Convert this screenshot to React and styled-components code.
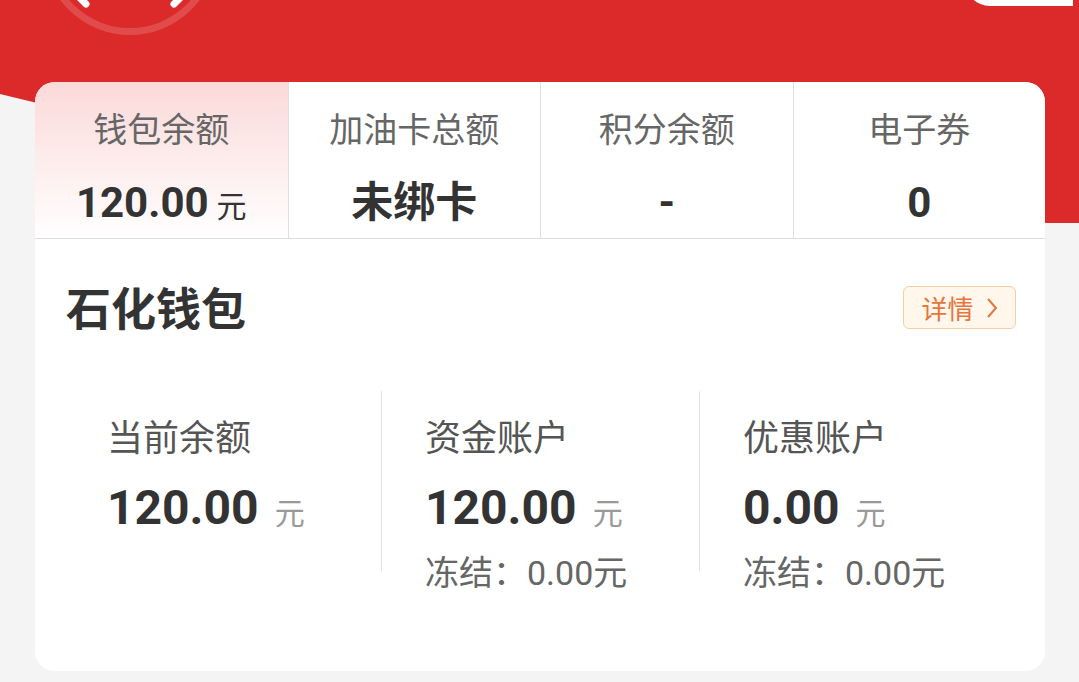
import React from 'react';
import styled, { createGlobalStyle } from 'styled-components';

const GlobalStyle = createGlobalStyle`
  html, body {
    margin: 0;
    padding: 0;
    background: #f4f4f4;
  }
  body {
    font-family: Roboto, "Noto Sans CJK SC", "Noto Sans", sans-serif;
  }
`;

const Page = styled.div`
  width: 1079px;
  height: 682px;
  overflow: hidden;
  background: #f4f4f4;
`;

const Hero = styled.div`
  height: 223px;
  background: #dc2929;
  clip-path: circle(4337px at 1050px -4114px);
  display: flex;
  justify-content: space-between;
  align-items: flex-start;
`;

const Avatar = styled.div`
  width: 174px;
  height: 174px;
  margin: -139px 0 0 43px;
  border-radius: 50%;
  box-sizing: border-box;
  border: 7px solid rgba(255, 255, 255, 0.16);
  display: flex;
  align-items: center;
  justify-content: center;
`;

const Pill = styled.div`
  width: 108px;
  height: 50px;
  margin: -44px 6px 0 0;
  background: #fff;
  border-radius: 25px 0 0 25px;
`;

const Card = styled.div`
  position: relative;
  z-index: 1;
  margin: -141px 34px 0 35px;
  background: #fff;
  border-radius: 20px;
  overflow: hidden;
  padding-bottom: 78px;
`;

const Tabs = styled.div`
  display: grid;
  grid-template-columns: repeat(4, 1fr);
  border-bottom: 1px solid #dedede;
`;

const Tab = styled.div`
  display: flex;
  flex-direction: column;
  align-items: center;
  padding: 28px 0 5px;
  border-left: ${p => (p.$first ? 'none' : '1px solid #dedede')};
  background: ${p => (p.$active ? 'linear-gradient(180deg, #fbd9d9 0%, #fff 100%)' : '#fff')};
`;

const TabLabel = styled.div`
  font-size: 34px;
  line-height: 41px;
  color: #666;
`;

const TabValue = styled.div`
  margin-top: 26px;
  font-size: 42px;
  line-height: 52px;
  font-weight: 700;
  color: #333;
  display: flex;
  align-items: baseline;
`;

const Unit = styled.span`
  font-weight: 400;
  font-size: ${p => p.$size || 30}px;
  color: ${p => p.$color || '#333'};
  margin-left: ${p => p.$gap || 8}px;
`;

const SectionHead = styled.div`
  display: flex;
  align-items: center;
  justify-content: space-between;
  padding: 45px 29px 0 31px;
`;

const Title = styled.div`
  font-size: 45px;
  line-height: 53px;
  font-weight: 700;
  color: #333;
`;

const DetailButton = styled.div`
  box-sizing: border-box;
  width: 113px;
  height: 43px;
  margin-bottom: 6px;
  display: flex;
  align-items: center;
  justify-content: center;
  gap: 12px;
  border: 1px solid #f3cfa6;
  border-radius: 6px;
  background: #fff6ec;
  color: #e5753b;
  font-size: 26px;
`;

const Accounts = styled.div`
  display: grid;
  grid-template-columns: repeat(3, 318px);
  margin: 54px 28px 0;
`;

const Account = styled.div`
  position: relative;
  padding: 27px 0 0 44px;

  &::before {
    content: '';
    display: ${p => (p.$first ? 'none' : 'block')};
    position: absolute;
    left: 0;
    top: 0;
    width: 1px;
    height: 180px;
    background: #e2e2e2;
  }
`;

const AccountLabel = styled.div`
  font-size: 36px;
  line-height: 43px;
  color: #555;
`;

const AccountValue = styled.div`
  margin-top: 17px;
  font-size: 48px;
  line-height: 60px;
  font-weight: 700;
  color: #333;
  display: flex;
  align-items: baseline;
`;

const Frozen = styled.div`
  margin-top: 9px;
  font-size: 34px;
  line-height: 40px;
  color: #666;
`;

const tabs = [
  { label: '钱包余额', value: '120.00', unit: '元', active: true },
  { label: '加油卡总额', value: '未绑卡' },
  { label: '积分余额', value: '-' },
  { label: '电子券', value: '0' }
];

const accounts = [
  { label: '当前余额', value: '120.00' },
  { label: '资金账户', value: '120.00', frozen: '0.00' },
  { label: '优惠账户', value: '0.00', frozen: '0.00' }
];

export default function App() {
  return (
    <Page>
      <GlobalStyle />
      <Hero>
        <Avatar>
          <svg width="160" height="160" viewBox="0 0 160 160">
            <path d="M28 128 L36 136" stroke="#fff" strokeWidth="7" strokeLinecap="round" />
            <path d="M132 128 L124 136" stroke="#fff" strokeWidth="7" strokeLinecap="round" />
          </svg>
        </Avatar>
        <Pill />
      </Hero>
      <Card>
        <Tabs>
          {tabs.map((t, i) => (
            <Tab key={t.label} $first={i === 0} $active={t.active}>
              <TabLabel>{t.label}</TabLabel>
              <TabValue>
                {t.value}
                {t.unit && <Unit>{t.unit}</Unit>}
              </TabValue>
            </Tab>
          ))}
        </Tabs>
        <SectionHead>
          <Title>石化钱包</Title>
          <DetailButton>
            <span>详情</span>
            <svg width="12" height="22" viewBox="0 0 12 22">
              <path d="M2 2 L10 11 L2 20" fill="none" stroke="#e5753b" strokeWidth="2" />
            </svg>
          </DetailButton>
        </SectionHead>
        <Accounts>
          {accounts.map((a, i) => (
            <Account key={a.label} $first={i === 0}>
              <AccountLabel>{a.label}</AccountLabel>
              <AccountValue>
                {a.value}
                <Unit $color="#999" $gap={16}>元</Unit>
              </AccountValue>
              {a.frozen && <Frozen>冻结：{a.frozen}元</Frozen>}
            </Account>
          ))}
        </Accounts>
      </Card>
    </Page>
  );
}
